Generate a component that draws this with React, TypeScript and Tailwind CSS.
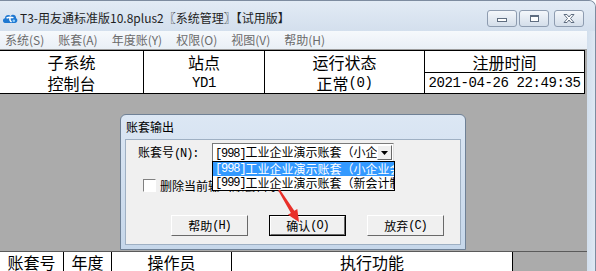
import React from "react";

const LAT_T = "font-['Liberation_Mono',monospace] text-[14px] tracking-[-0.4px]";
const LAT_D = "font-['Liberation_Mono',monospace] text-[12px] tracking-[-1.1px]";

function Mx({ t, c }: { t: string; c: string }) {
  const parts = t.split(/([\x20-\x7e]+)/).filter((p) => p.length > 0);
  return (
    <>
      {parts.map((p, i) =>
        /^[\x20-\x7e]+$/.test(p) ? (
          <span key={i} className={c}>
            {p}
          </span>
        ) : (
          <span key={i}>{p}</span>
        )
      )}
    </>
  );
}

function TitleBtn({ kind }: { kind: "min" | "max" | "close" }) {
  return (
    <div className="w-[30px] h-[17px] rounded-[3px] border border-[#8e9cb0] bg-gradient-to-b from-[#f4f7fb] to-[#d4deea] flex items-center justify-center">
      {kind === "min" && <div className="w-[10px] h-[4px] mt-[3px] border border-[#5f6d80] bg-white" />}
      {kind === "max" && <div className="w-[9px] h-[7px] border border-[#5f6d80] border-t-2 bg-white" />}
      {kind === "close" && (
        <svg width="12" height="9" viewBox="0 0 12 9">
          <path d="M1 0.5 L4 0.5 L6 3 L8 0.5 L11 0.5 L7.5 4.5 L11 8.5 L8 8.5 L6 6 L4 8.5 L1 8.5 L4.5 4.5 Z" fill="#fff" stroke="#5f6d80" strokeWidth="1" />
        </svg>
      )}
    </div>
  );
}

function Btn({ label, def }: { label: string; def?: boolean }) {
  return (
    <div className={def ? "border border-black" : ""}>
      <div
        className={
          (def ? "w-[75px] h-[19px] " : "w-[77px] h-[21px] ") +
          "border-t border-l border-t-white border-l-white border-b border-r border-b-[#696969] border-r-[#696969] bg-[#f0f0f0] flex items-center justify-center text-[12px] leading-none"
        }
      >
        <Mx t={label} c={LAT_D} />
      </div>
    </div>
  );
}

export default function App() {
  return (
    <div className="relative w-[596px] h-[271px] overflow-hidden bg-white font-['Noto_Sans_CJK_SC',sans-serif] text-black">
      <div className="flex flex-col w-[596px] h-[272px] rounded-tr-[7px] border-t border-r border-[#7d8ca0] bg-[#d6e2ef] overflow-hidden">
        {/* title bar */}
        <div className="h-[30px] shrink-0 flex items-center bg-gradient-to-b from-[#e2ebf5] to-[#d3dfed]">
          <div className="ml-[2px] mt-[3px] w-[16px] h-[16px]">
            <svg width="16" height="16" viewBox="0 0 16 16">
              <path d="M3 13 C0.3 13 0.3 8.5 3 8.3 C3 5 7 4 8.6 6.2 C10 3.6 14.6 4.6 14 8.3 C16.2 8.8 15.6 13 13 13 Z" fill="#1f78d1" />
              <path d="M4.5 8.2 C6 7.2 9 7 11.5 7.6 M8 7.6 C7.6 9.5 7.8 11 9.6 12" stroke="#ffffff" strokeWidth="1.4" fill="none" />
              <circle cx="11.8" cy="10.8" r="1.3" fill="#8fd0ff" />
            </svg>
          </div>
          <div className="ml-[2px] mt-[3px] text-[12px] leading-none text-[#1e1e1e] whitespace-nowrap">
            T3-用友通标准版10.8plus2〖系统管理〗【试用版】
          </div>
          <div className="flex-1" />
          <div className="flex gap-[2px] mr-[11px] mt-[4px]">
            <TitleBtn kind="min" />
            <TitleBtn kind="max" />
            <div className="w-px" />
            <TitleBtn kind="close" />
          </div>
        </div>

        <div className="flex flex-1">
          {/* main client column */}
          <div className="w-[587px] shrink-0 flex flex-col bg-[#ababab]">
            {/* menu bar */}
            <div className="h-[18px] flex items-center gap-[14px] pl-[5px] bg-gradient-to-b from-[#f6f9fc] to-[#e9eff6] text-[12px] leading-none text-[#6b6b6b]">
              <span>系统(S)</span>
              <span>账套(A)</span>
              <span>年度账(Y)</span>
              <span>权限(O)</span>
              <span>视图(V)</span>
              <span>帮助(H)</span>
            </div>
            <div className="h-px bg-[#9c9c9c]" />
            {/* top table */}
            <div className="w-[585px] border-t border-b border-black bg-white text-[16px] leading-none">
              <div className="flex h-[21px]">
                <div className="w-[144px] border-r border-black flex items-center justify-center">子系统</div>
                <div className="w-[121px] border-r border-black flex items-center justify-center">站点</div>
                <div className="w-[160px] border-r border-black flex items-center justify-center">运行状态</div>
                <div className="w-[160px] border-r border-black flex items-center justify-center">注册时间</div>
              </div>
              <div className="flex h-[21px]">
                <div className="w-[144px] border-r border-black flex items-center justify-center">控制台</div>
                <div className="w-[121px] border-r border-black flex items-center justify-center">
                  <Mx t="YD1" c={LAT_T} />
                </div>
                <div className="w-[160px] border-r border-black flex items-center justify-center">
                  <Mx t="正常(0)" c={LAT_T} />
                </div>
                <div className="w-[160px] border-r border-t border-black flex items-center justify-center">
                  <Mx t="2021-04-26 22:49:35" c={LAT_T} />
                </div>
              </div>
            </div>
            {/* gray workspace */}
            <div className="h-[157px]" />
            {/* bottom table */}
            <div className="border-t border-[#5a5a5a] flex h-[21px] text-[16px] leading-none">
              <div className="flex w-[513px] bg-white">
                <div className="w-[64px] border-r border-black flex items-center justify-center">账套号</div>
                <div className="w-[48px] border-r border-black flex items-center justify-center">年度</div>
                <div className="w-[120px] border-r border-black flex items-center justify-center">操作员</div>
                <div className="w-[281px] border-r border-black flex items-center justify-center">执行功能</div>
              </div>
            </div>
          </div>
          {/* right frame */}
          <div className="flex-1 bg-gradient-to-r from-[#d2dfed] to-[#dfe8f3]" />
        </div>
      </div>

      {/* modal dialog */}
      <div className="absolute left-[120px] top-[114px] w-[346px] h-[136px] rounded-t-[6px] border border-[#6f8196] bg-gradient-to-b from-[#dce7f4] to-[#c6d7ea] flex flex-col">
        <div className="h-[24px] shrink-0 pl-[5px] flex items-center text-[12px] leading-none text-black">账套输出</div>
        <div className="relative mx-[4px] mb-[4px] flex-1 bg-[#f0f0f0] border border-[#9fb0c3] text-[12px] leading-none">
          <div className="flex items-center pt-[3px] pl-[12px]">
            <div className="w-[74px]">
              <Mx t="账套号(N):" c={LAT_D} />
            </div>
            <div className="w-[182px] h-[19px] flex items-center border-t border-l border-t-[#7a7a7a] border-l-[#7a7a7a] border-b border-r border-b-[#e0e0e0] border-r-[#e0e0e0] bg-white">
              <div className="flex-1 overflow-hidden whitespace-nowrap pl-[2px]">
                <Mx t="[998]工业企业演示账套（小企业会计制度）" c={LAT_D} />
              </div>
              <div className="w-[15px] h-[15px] mr-px border-t border-l border-t-white border-l-white border-b border-r border-b-[#696969] border-r-[#696969] bg-[#f0f0f0] flex items-center justify-center">
                <svg width="7" height="4" viewBox="0 0 7 4">
                  <path d="M0 0 H7 L3.5 4 Z" fill="#000" />
                </svg>
              </div>
            </div>
          </div>
          <div className="flex items-center mt-[17px] pl-[17px]">
            <div className="w-[13px] h-[13px] border-t border-l border-t-[#808080] border-l-[#808080] border-b border-r border-b-white border-r-white bg-white" />
            <div className="ml-[4px] whitespace-nowrap">删除当前输出账套目录</div>
          </div>
          <div className="flex items-center gap-[21px] mt-[23px] pl-[45px]">
            <Btn label="帮助(H)" />
            <Btn label="确认(O)" def />
            <Btn label="放弃(C)" />
          </div>

          {/* open dropdown list */}
          <div className="absolute left-[86px] top-[21px] w-[183px] border border-black bg-white overflow-hidden whitespace-nowrap">
            <div className="h-[14px] flex items-center pl-[2px] bg-[#3399ff] text-white">
              <Mx t="[998]工业企业演示账套（小企业会计制度）" c={LAT_D} />
            </div>
            <div className="h-[14px] flex items-center pl-[2px]">
              <Mx t="[999]工业企业演示账套（新会计制度）" c={LAT_D} />
            </div>
          </div>
        </div>
      </div>

      {/* red annotation arrow */}
      <svg className="absolute left-0 top-0 pointer-events-none" width="596" height="271" viewBox="0 0 596 271">
        <polygon
          points="278.2,190.5 279.9,189.5 294.3,210.7 297.3,208.9 299,222 287.9,214.7 290.9,212.9"
          fill="#e8302a"
        />
      </svg>
    </div>
  );
}
